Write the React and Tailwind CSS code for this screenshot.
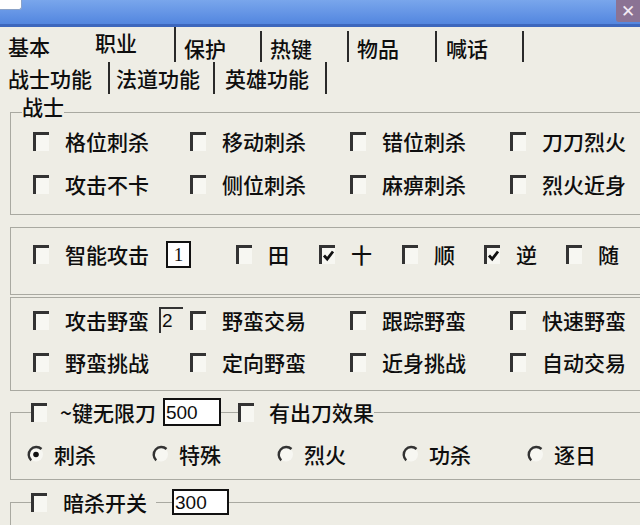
import React from 'react'

const Check = ({ checked }) => (
  <span className="inline-flex w-[16px] h-[19px] border-t-[3px] border-l-[3px] border-[#333] bg-[#f7f7f2] shrink-0 items-center justify-center">
    {checked && (
      <svg width="13" height="13" viewBox="0 0 13 13">
        <path d="M2 6.5 L5.2 10 L11 2.5" stroke="#111" strokeWidth="2.8" fill="none" />
      </svg>
    )}
  </span>
)

const Radio = ({ checked }) => (
  <svg width="17" height="19" viewBox="0 0 17 19" className="shrink-0">
    <circle cx="9" cy="9.5" r="7" fill="#f7f7f2" />
    <path d="M14.5 4 A7.5 7.5 0 0 0 4.2 15.3" stroke="#333" strokeWidth="2.4" fill="none" />
    {checked && <circle cx="9" cy="9.5" r="2.8" fill="#111" />}
  </svg>
)

const Item = ({ label, checked, w = 'w-[160px]' }) => (
  <div className={`${w} flex items-center gap-[16px] h-[22px]`}>
    <Check checked={checked} />
    <span>{label}</span>
  </div>
)

const Box = ({ children, className = '' }) => (
  <span className={`inline-flex items-center bg-white border-2 border-[#111] font-['Liberation_Sans',sans-serif] text-[19px] leading-none ${className}`}>
    {children}
  </span>
)

export default function App() {
  return (
    <div className="w-[640px] h-[525px] overflow-hidden bg-[#eeede5] text-[#0e0e0e] text-[21px] leading-[22px] font-medium font-['Noto_Sans_CJK_SC','Noto_Sans',sans-serif]">
      {/* title bar */}
      <div className="h-[27px] flex justify-between bg-gradient-to-b from-[#79a6ec] to-[#5386df] border-b-[3px] border-[#3d67bd]">
        <div className="w-[22px] h-[10px] bg-white border-r border-b border-[#8aa2c8] rounded-br-[3px]" />
        <div className="w-[24px] h-[22px] bg-[#8b7394] rounded-bl-[3px] flex items-center justify-center text-[#f3ecf5] text-[17px] font-['DejaVu_Sans',sans-serif]">
          ✕
        </div>
      </div>

      {/* tabs */}
      <div className="h-[35px] flex items-stretch leading-[20px]">
        <div className="w-[80px] pl-[8px] flex items-center pt-[2px]">基本</div>
        <div className="w-[96px] pl-[15px] flex items-center pb-[6px] border-r-2 border-[#2a2a2a]">职业</div>
        <div className="w-[86px] pl-[8px] flex items-center pt-[2px] border-r-2 border-[#2a2a2a] mt-[4px]">保护</div>
        <div className="w-[87px] pl-[8px] flex items-center pt-[2px] border-r-2 border-[#2a2a2a] mt-[4px]">热键</div>
        <div className="w-[88px] pl-[8px] flex items-center pt-[2px] border-r-2 border-[#2a2a2a] mt-[4px]">物品</div>
        <div className="w-[87px] pl-[9px] flex items-center pt-[2px] border-r-2 border-[#2a2a2a] mt-[4px]">喊话</div>
      </div>
      <div className="h-[32px] flex items-stretch leading-[20px]">
        <div className="w-[110px] pl-[8px] flex items-center border-r-2 border-[#2a2a2a]">战士功能</div>
        <div className="w-[105px] pl-[6px] flex items-center border-r-2 border-[#2a2a2a]">法道功能</div>
        <div className="w-[112px] pl-[10px] flex items-center border-r-2 border-[#2a2a2a]">英雄功能</div>
      </div>

      <div className="pl-[10px]">
        {/* 战士 */}
        <fieldset className="w-[660px] border border-[#a9a9a1] pb-[19px]">
          <legend className="ml-[11px] pt-[2px] pb-[14px] leading-[20px]">战士</legend>
          <div className="pl-[22px] flex flex-col gap-[21px]">
            <div className="flex">
              <Item label="格位刺杀" w="w-[157px]" />
              <Item label="移动刺杀" />
              <Item label="错位刺杀" />
              <Item label="刀刀烈火" />
            </div>
            <div className="flex">
              <Item label="攻击不卡" w="w-[157px]" />
              <Item label="侧位刺杀" />
              <Item label="麻痹刺杀" />
              <Item label="烈火近身" />
            </div>
          </div>
        </fieldset>

        {/* 智能攻击 */}
        <fieldset className="w-[660px] h-[68px] mt-[12px] border border-[#a9a9a1] pl-[22px] pb-[14px] flex items-center">
          <div className="flex items-center">
            <Check />
            <span className="ml-[16px]">智能攻击</span>
            <Box className="ml-[17px] w-[25px] h-[27px] justify-center font-['Liberation_Serif',serif] text-[18px]">1</Box>
            <div className="ml-[45px] flex">
              <Item label="田" w="w-[83px]" />
              <Item label="十" checked w="w-[83px]" />
              <Item label="顺" w="w-[82px]" />
              <Item label="逆" checked w="w-[82px]" />
              <Item label="随" w="w-[82px]" />
            </div>
          </div>
        </fieldset>

        {/* 野蛮 */}
        <fieldset className="w-[660px] mt-[2px] border border-[#a9a9a1] pt-[11px] pb-[17px] pl-[22px] flex flex-col gap-[20px]">
          <div className="flex">
            <div className="w-[157px] flex items-center h-[22px]">
              <Check />
              <span className="ml-[16px]">攻击野蛮</span>
              <span className="ml-[10px] h-[26px] w-[24px] border-t-2 border-l-2 border-[#333] font-['Liberation_Sans',sans-serif] font-normal text-[19px] leading-[24px] pl-[1px]">2</span>
            </div>
            <Item label="野蛮交易" />
            <Item label="跟踪野蛮" />
            <Item label="快速野蛮" />
          </div>
          <div className="flex">
            <Item label="野蛮挑战" w="w-[157px]" />
            <Item label="定向野蛮" />
            <Item label="近身挑战" />
            <Item label="自动交易" />
          </div>
        </fieldset>

        {/* 无限刀 */}
        <fieldset className="w-[660px] mt-[7px] border border-[#a9a9a1] pb-[14px]">
          <legend className="ml-[20px]">
            <div className="flex items-center">
              <Check />
              <span className="ml-[13px]">~键无限刀</span>
              <Box className="ml-[7px] w-[58px] h-[28px] pl-[1px] font-normal">500</Box>
              <span className="w-[17px] h-px bg-[#a9a9a1]" />
              <Check />
              <span className="ml-[15px]">有出刀效果</span>
            </div>
          </legend>
          <div className="mt-[17px] pl-[16px] flex">
            {['刺杀', '特殊', '烈火', '功杀', '逐日'].map((t, i) => (
              <div key={t} className="w-[125px] flex items-center gap-[10px] h-[22px]">
                <Radio checked={i === 0} />
                <span>{t}</span>
              </div>
            ))}
          </div>
        </fieldset>

        {/* 暗杀 */}
        <fieldset className="w-[660px] h-[60px] mt-[9px] border border-[#a9a9a1]">
          <legend className="ml-[20px]">
            <div className="flex items-center">
              <Check />
              <span className="ml-[16px]">暗杀开关</span>
              <span className="ml-[9px] w-[16px] h-px bg-[#a9a9a1]" />
              <Box className="w-[57px] h-[26px] pl-[1px] font-normal">300</Box>
            </div>
          </legend>
        </fieldset>
      </div>
    </div>
  )
}
